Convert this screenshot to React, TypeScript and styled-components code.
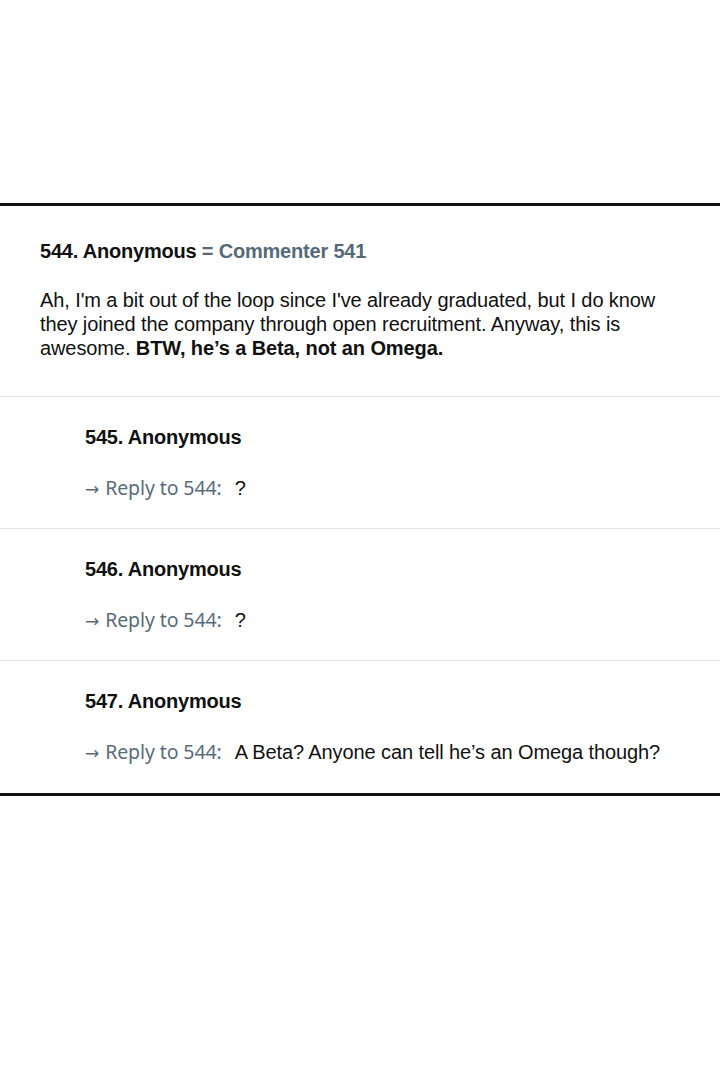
import React from "react";
import styled, { createGlobalStyle } from "styled-components";

const Global = createGlobalStyle`
  html, body {
    margin: 0;
    padding: 0;
    background: #fff;
  }
  body {
    font-family: "Liberation Sans", Arial, sans-serif;
    color: #111;
  }
`;

const Page = styled.div`
  width: 720px;
  height: 1080px;
  padding-top: 203px;
  box-sizing: border-box;
`;

const Thread = styled.section`
  border-top: 3px solid #111;
  border-bottom: 3px solid #111;
`;

const Post = styled.article<{ $indent?: boolean }>`
  padding: ${(p) => (p.$indent ? "28px 40px 28px 85px" : "33px 50px 36px 40px")};
  border-bottom: 1px solid #e2e2e2;
  &:last-child {
    border-bottom: none;
    padding-bottom: 29px;
  }
`;

const Author = styled.h3`
  margin: 0;
  font-size: 20px;
  font-weight: bold;
  line-height: 24px;
  letter-spacing: -0.2px;
  color: #111;
`;

const Alias = styled.span`
  color: #56697a;
`;

const Body = styled.p`
  margin: 25px 0 0;
  font-size: 20px;
  line-height: 24px;
  letter-spacing: -0.1px;
  color: #111;
`;

const Reply = styled.p`
  margin: 27px 0 0;
  height: 24px;
  font-size: 20px;
  line-height: 24px;
  letter-spacing: -0.1px;
  color: #111;
  white-space: nowrap;
`;

const ReplyTag = styled.span`
  font-family: "Noto Sans", "Open Sans", sans-serif;
  font-size: 19.5px;
  line-height: 1;
  color: #5a6b78;
  margin-right: 13px;
`;

const Arrow = styled.span`
  font-family: "DejaVu Sans", sans-serif;
  font-size: 17px;
  line-height: 1;
  margin-right: 6px;
`;

const replies = [
  { id: 545, text: "?" },
  { id: 546, text: "?" },
  { id: 547, text: "A Beta? Anyone can tell he\u2019s an Omega though?" },
];

export default function App() {
  return (
    <Page>
      <Global />
      <Thread>
        <Post>
          <Author>
            544. Anonymous <Alias>= Commenter 541</Alias>
          </Author>
          <Body>
            Ah, I'm a bit out of the loop since I've already graduated, but I do
            know they joined the company through open recruitment. Anyway, this
            is awesome. <b>BTW, he’s a Beta, not an Omega.</b>
          </Body>
        </Post>
        {replies.map((r) => (
          <Post $indent key={r.id}>
            <Author>{r.id}. Anonymous</Author>
            <Reply>
              <ReplyTag>
                <Arrow>→</Arrow>Reply to 544:
              </ReplyTag>
              {r.text}
            </Reply>
          </Post>
        ))}
      </Thread>
    </Page>
  );
}
